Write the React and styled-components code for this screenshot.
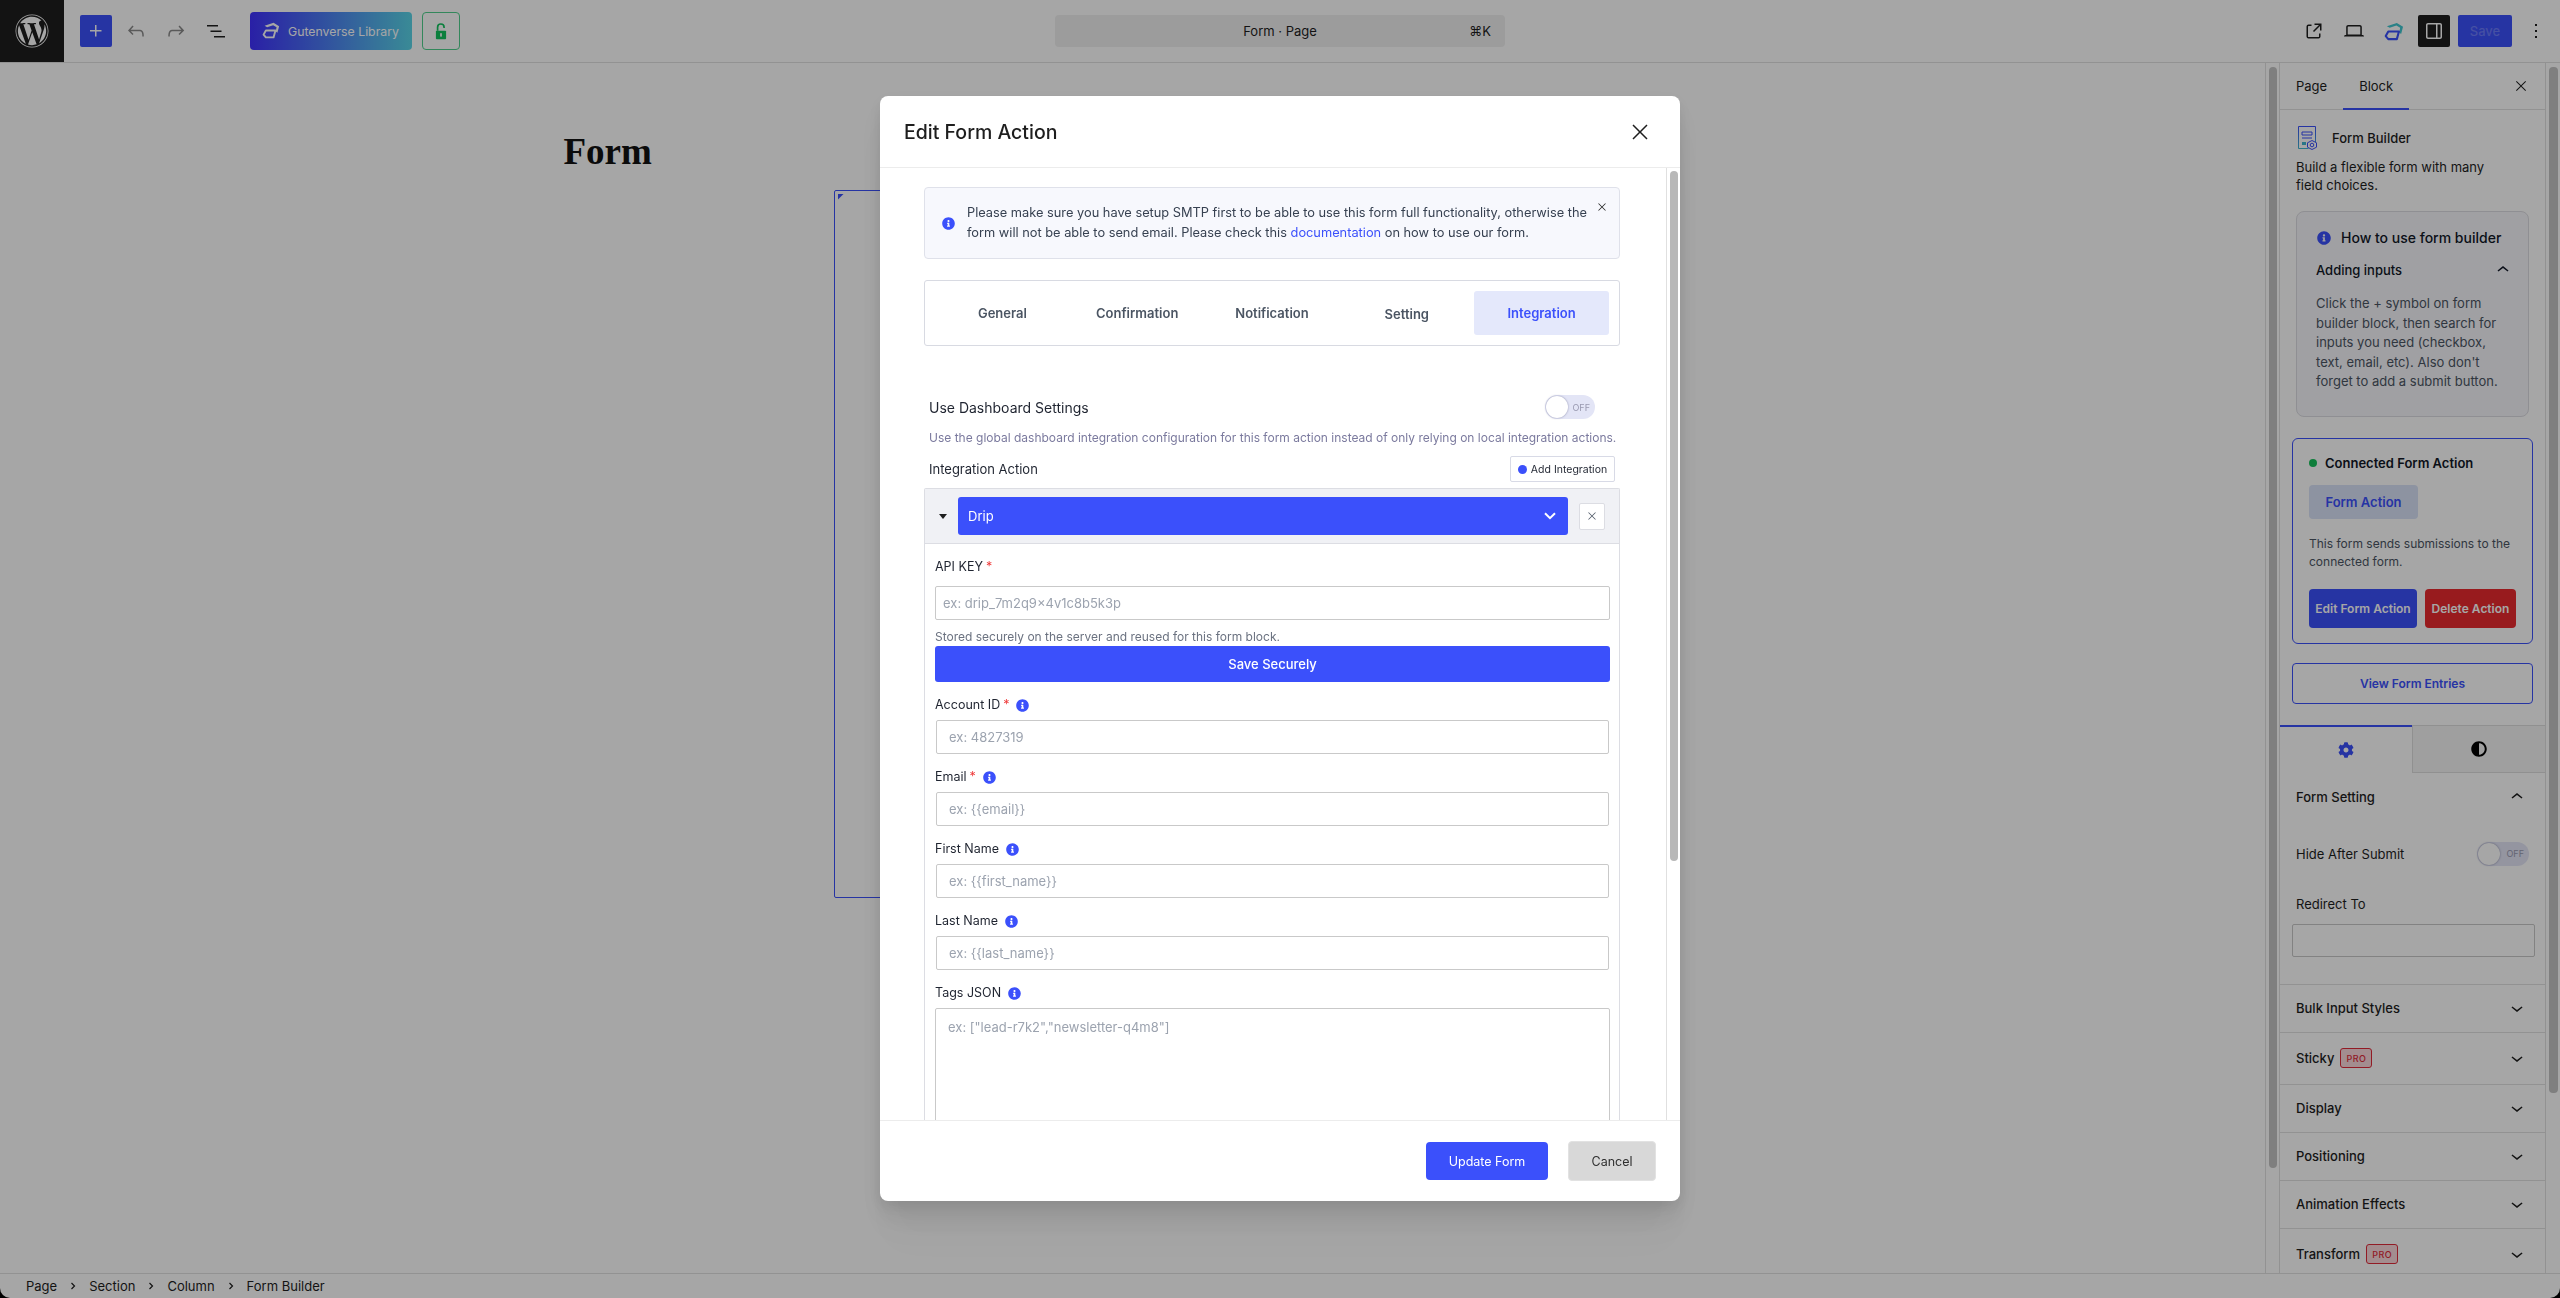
import React from 'react';
import styled, { createGlobalStyle } from 'styled-components';
import { FaWordpress, FaInfoCircle, FaCog, FaAdjust } from 'react-icons/fa';

const BLUE = '#3b50fb';

const GlobalStyle = createGlobalStyle`
  html, body {
    margin: 0;
    height: 100%;
    overflow: hidden;
    background: #000;
    font-family: Inter, "Liberation Sans", sans-serif;
    color: #1e1e1e;
  }
  * { box-sizing: border-box; }
`;

const Shell = styled.div`
  width: 100%;
  height: 100vh;
  display: flex;
  flex-direction: column;
  background: #fff;
  border-radius: 0 0 10px 10px;
  overflow: hidden;
`;

const TopBar = styled.header`
  height: 63px;
  flex: none;
  display: grid;
  grid-template-columns: 1fr 450px 1fr;
  align-items: center;
  border-bottom: 1px solid #e0e0e0;
`;

const TopLeft = styled.div`
  display: flex;
  align-items: center;
  height: 62px;
`;

const LogoTile = styled.div`
  width: 64px;
  height: 62px;
  background: #1e1e1e;
  color: #fff;
  display: flex;
  align-items: center;
  justify-content: center;
  font-size: 34px;
  margin-right: 16px;
`;

const InserterButton = styled.div`
  width: 32px;
  height: 32px;
  border-radius: 2px;
  background: ${BLUE};
  display: flex;
  align-items: center;
  justify-content: center;
  margin-right: 8px;
`;

const ToolIcon = styled.div`
  width: 32px;
  height: 32px;
  margin-right: ${(p) => p.$gap || 8}px;
  display: flex;
  align-items: center;
  justify-content: center;
  color: ${(p) => p.$color || '#1e1e1e'};
`;

const LibraryButton = styled.div`
  width: 162px;
  height: 38px;
  margin-left: 2px;
  border-radius: 4px;
  background: linear-gradient(90deg, #4031ff 0%, #59d5e7 100%);
  display: flex;
  align-items: center;
  gap: 8px;
  padding-left: 12px;
  color: #fff;
  font-size: 12.3px;
`;

const LockButton = styled.div`
  width: 38px;
  height: 38px;
  margin-left: 10px;
  border: 1px solid #4fd08c;
  border-radius: 4px;
  display: flex;
  align-items: center;
  justify-content: center;
`;

const CommandBar = styled.div`
  height: 32px;
  border-radius: 4px;
  background: #f0f0f0;
  display: flex;
  align-items: center;
  justify-content: center;
  position: relative;
  font-size: 13px;
`;

const Shortcut = styled.span`
  position: absolute;
  right: 14px;
`;

const TopRight = styled.div`
  display: flex;
  align-items: center;
  justify-content: flex-end;
  padding-right: 12px;
`;

const ToggleTile = styled.div`
  width: 32px;
  height: 32px;
  background: #1e1e1e;
  border-radius: 2px;
  display: flex;
  align-items: center;
  justify-content: center;
  margin-right: 8px;
`;

const SaveButton = styled.div`
  width: 54px;
  height: 32px;
  background: ${BLUE};
  border-radius: 2px;
  color: rgba(255, 255, 255, 0.25);
  font-size: 13px;
  font-weight: 500;
  display: flex;
  align-items: center;
  justify-content: center;
  margin-right: 12px;
`;

const Workspace = styled.div`
  flex: 1;
  min-height: 0;
  display: flex;
`;

const Canvas = styled.main`
  flex: 1;
  padding-top: 67px;
  display: flex;
  flex-direction: column;
  align-items: center;
`;

const PageTitle = styled.h1`
  width: 1138px;
  margin: 0 0 16px;
  font-family: "Liberation Serif", serif;
  font-size: 37px;
  line-height: 44px;
  font-weight: 700;
  color: #111;
`;

const FormBlock = styled.div`
  width: 598px;
  height: 708px;
  border: 1px solid ${BLUE};
  border-radius: 2px;
  padding: 3px;
`;

const BlockCorner = styled.div`
  width: 6px;
  height: 6px;
  background: ${BLUE};
  clip-path: polygon(0 0, 100% 0, 0 100%);
`;

const ScrollTrack = styled.div`
  width: 14px;
  flex: none;
  padding: ${(p) => p.$top}px 2px 0 3px;
  border-left: ${(p) => (p.$line ? '1px solid #e0e0e0' : 'none')};
`;

const ScrollThumb = styled.div`
  height: ${(p) => p.$height}px;
  border-radius: 4px;
  background: ${(p) => p.$color || '#c4c4c4'};
`;

const Sidebar = styled.aside`
  width: 267px;
  flex: none;
  border-left: 1px solid #e0e0e0;
  border-right: 1px solid #e0e0e0;
  overflow: hidden;
`;

const SideTabs = styled.div`
  height: 47px;
  display: flex;
  align-items: stretch;
  border-bottom: 1px solid #e0e0e0;
  position: relative;
`;

const SideTab = styled.div`
  padding: 0 16px;
  font-size: 13px;
  display: flex;
  align-items: center;
  margin-bottom: -1px;
  border-bottom: 2px solid ${(p) => (p.$active ? BLUE : 'transparent')};
`;

const SideClose = styled.div`
  margin-left: auto;
  margin-right: 16px;
  display: flex;
  align-items: center;
`;

const SidePad = styled.div`
  padding: 16px 16px 0;
`;

const BlockHead = styled.div`
  height: 24px;
  display: flex;
  align-items: center;
  gap: 14px;
  padding-left: 2px;
  font-size: 13px;
  font-weight: 500;
`;

const BlockDesc = styled.p`
  margin: 8px 0 17px;
  max-width: 210px;
  font-size: 13px;
  line-height: 18px;
`;

const HelpBox = styled.div`
  border: 1px solid #dcdce2;
  border-radius: 8px;
  background: #f6f6fb;
  padding: 16px 13px 24px 19px;
`;

const HelpTitle = styled.div`
  display: flex;
  align-items: center;
  gap: 10px;
  padding-left: 1px;
  font-size: 14px;
  line-height: 20px;
  font-weight: 500;
  color: #111827;
`;

const HelpSub = styled.div`
  margin-top: 13px;
  height: 18px;
  display: flex;
  justify-content: space-between;
  align-items: center;
  font-size: 13px;
  font-weight: 500;
  color: #111827;
`;

const HelpText = styled.p`
  margin: 15px 0 0;
  font-size: 13px;
  line-height: 19.5px;
  color: #4b5563;
`;

const ConnectedBox = styled.div`
  margin: 21px -4px 0;
  border: 1px solid ${BLUE};
  border-radius: 6px;
  padding: 15px 16px;
`;

const ConnectedHead = styled.div`
  display: flex;
  align-items: center;
  gap: 8px;
  font-size: 13px;
  line-height: 18px;
  font-weight: 600;
  color: #111827;
`;

const StatusDot = styled.span`
  width: 8px;
  height: 8px;
  border-radius: 50%;
  background: #16c15a;
`;

const ActionPill = styled.div`
  margin-top: 13px;
  width: 109px;
  height: 34px;
  border-radius: 4px;
  background: #d9e2f7;
  color: ${BLUE};
  font-size: 13px;
  font-weight: 600;
  display: flex;
  align-items: center;
  justify-content: center;
`;

const ConnectedText = styled.p`
  margin: 16px 0 18px;
  font-size: 12px;
  line-height: 18px;
  color: #4b5563;
`;

const ActionRow = styled.div`
  display: flex;
  gap: 8px;
`;

const ActionButton = styled.div`
  width: ${(p) => p.$width}px;
  height: 39px;
  border-radius: 4px;
  background: ${(p) => p.$bg};
  color: #fff;
  font-size: 12px;
  font-weight: 600;
  display: flex;
  align-items: center;
  justify-content: center;
`;

const EntriesButton = styled.div`
  margin: 19px -4px 0;
  height: 41px;
  border: 1px solid ${BLUE};
  border-radius: 4px;
  color: ${BLUE};
  font-size: 12px;
  font-weight: 600;
  display: flex;
  align-items: center;
  justify-content: center;
`;

const StyleTabs = styled.div`
  margin-top: 21px;
  height: 48px;
  display: grid;
  grid-template-columns: 132px 133px;
`;

const StyleTab = styled.div`
  display: flex;
  align-items: center;
  justify-content: center;
  font-size: 16px;
  color: ${(p) => (p.$active ? BLUE : '#000')};
  background: ${(p) => (p.$active ? 'transparent' : '#f5f5f5')};
  border-top: ${(p) => (p.$active ? `2px solid ${BLUE}` : '1px solid #dedede')};
  border-left: ${(p) => (p.$active ? 'none' : '1px solid #dedede')};
  border-bottom: ${(p) => (p.$active ? 'none' : '1px solid #dedede')};
`;

const PanelRow = styled.div`
  height: ${(p) => p.$height}px;
  padding: 0 16px;
  display: flex;
  align-items: center;
  justify-content: space-between;
  font-size: 13px;
  font-weight: ${(p) => p.$weight || 400};
  border-top: ${(p) => (p.$line ? '1px solid #e0e0e0' : 'none')};
`;

const RowLabel = styled.span`
  display: flex;
  align-items: center;
  gap: 6px;
`;

const ProBadge = styled.span`
  width: 32px;
  height: 20px;
  border: 1px solid #e02a3a;
  border-radius: 3px;
  background: #fbd9dc;
  color: #e02a3a;
  font-size: 9px;
  font-weight: 500;
  letter-spacing: 0.4px;
  display: flex;
  align-items: center;
  justify-content: center;
`;

const SwitchTrack = styled.div`
  width: ${(p) => p.$width}px;
  height: 24px;
  border-radius: 12px;
  background: #e3e5f6;
  display: flex;
  align-items: center;
  justify-content: space-between;
  padding: 0 5px 0 1px;
  font-size: 9px;
  color: #9a9ab0;
`;

const SwitchKnob = styled.span`
  width: 22px;
  height: 22px;
  border-radius: 50%;
  background: #fff;
  box-shadow: 0 0 2px rgba(40, 40, 90, 0.5);
`;

const HideRow = styled.div`
  margin-top: 0;
  padding: 21px 16px 0;
  display: flex;
  align-items: center;
  justify-content: space-between;
  font-size: 13px;
`;

const RedirectBlock = styled.div`
  padding: 30px 10px 27px 16px;
  font-size: 13px;
  line-height: 16px;
`;

const RedirectInput = styled.div`
  margin: 12px 0 0 -4px;
  height: 33px;
  border: 1px solid #c8c8c8;
  border-radius: 2px;
`;

const StatusBar = styled.footer`
  height: 25px;
  flex: none;
  border-top: 1px solid #e0e0e0;
  padding-left: 26px;
  display: flex;
  align-items: center;
  gap: 13px;
  font-size: 13px;
`;

const Overlay = styled.div`
  position: fixed;
  inset: 0;
  padding-bottom: 1px;
  background: rgba(0, 0, 0, 0.35);
  display: flex;
  align-items: center;
  justify-content: center;
`;

const Modal = styled.div`
  width: 800px;
  height: 1105px;
  background: #fff;
  border-radius: 8px;
  overflow: hidden;
  display: flex;
  flex-direction: column;
  box-shadow: 0 5px 15px rgba(0, 0, 0, 0.08), 0 15px 27px rgba(0, 0, 0, 0.07),
    0 30px 36px rgba(0, 0, 0, 0.04), 0 50px 43px rgba(0, 0, 0, 0.02);
`;

const ModalHeader = styled.div`
  height: 72px;
  flex: none;
  border-bottom: 1px solid #ececec;
  padding: 0 28px 0 24px;
  display: flex;
  align-items: center;
  justify-content: space-between;
`;

const ModalTitle = styled.h2`
  margin: 0;
  font-size: 19.5px;
  font-weight: 500;
`;

const ModalBody = styled.div`
  flex: 1;
  min-height: 0;
  display: flex;
`;

const ModalContent = styled.div`
  width: 786px;
  padding: 19px 46px 0 44px;
  overflow: hidden;
`;

const Notice = styled.div`
  height: 72px;
  position: relative;
  display: flex;
  align-items: center;
  gap: 12px;
  padding-left: 17px;
  background: #f7f8fd;
  border: 1px solid #dfe1ea;
  border-radius: 4px;
  color: ${BLUE};
  font-size: 13px;
`;

const NoticeText = styled.div`
  width: 630px;
  font-size: 12.8px;
  line-height: 20px;
  color: #374151;
`;

const NoticeLink = styled.span`
  color: ${BLUE};
`;

const NoticeClose = styled.div`
  position: absolute;
  top: 13px;
  right: 11px;
  display: flex;
`;

const Tabs = styled.div`
  margin: 21px 0 49px;
  height: 66px;
  padding: 10px;
  border: 1px solid #d8dae2;
  border-radius: 3px;
  display: grid;
  grid-template-columns: repeat(5, 1fr);
`;

const TabItem = styled.div`
  display: flex;
  align-items: center;
  justify-content: center;
  border-radius: 3px;
  padding-top: ${(p) => (p.$low ? 2 : 0)}px;
  font-size: 13px;
  font-weight: 600;
  color: ${(p) => (p.$active ? BLUE : '#4b5563')};
  background: ${(p) => (p.$active ? '#e4e8fb' : 'transparent')};
`;

const DashboardRow = styled.div`
  height: 24px;
  padding: 0 25px 0 5px;
  display: flex;
  align-items: center;
  justify-content: space-between;
  font-size: 14px;
  color: #1f2430;
`;

const DashboardHelp = styled.p`
  margin: 11px 0 10px;
  padding-left: 5px;
  font-size: 12px;
  line-height: 16px;
  white-space: nowrap;
  color: #7b7a9e;
`;

const IntegrationRow = styled.div`
  height: 26px;
  padding: 0 5px;
  display: flex;
  align-items: center;
  justify-content: space-between;
  font-size: 13px;
  color: #1f2430;
`;

const AddButton = styled.div`
  width: 105px;
  height: 26px;
  border: 1px solid #d8dae6;
  border-radius: 2px;
  display: flex;
  align-items: center;
  justify-content: center;
  gap: 4px;
  font-size: 10.5px;
  color: #1f2430;
`;

const AddDot = styled.span`
  width: 9px;
  height: 9px;
  border-radius: 50%;
  background: ${BLUE};
`;

const Repeater = styled.div`
  margin-top: 6px;
  border: 1px solid #dcdde3;
  border-bottom: none;
  border-radius: 2px 2px 0 0;
`;

const RepeaterHead = styled.div`
  height: 55px;
  padding-left: 14px;
  display: flex;
  align-items: center;
  background: #f0f1f5;
  border-bottom: 1px solid #dcdde3;
`;

const Caret = styled.span`
  width: 0;
  height: 0;
  margin-right: 11px;
  border-left: 4px solid transparent;
  border-right: 4px solid transparent;
  border-top: 5px solid #1e1e1e;
`;

const DripSelect = styled.div`
  width: 610px;
  height: 38px;
  padding: 0 12px 0 10px;
  margin-right: 11px;
  background: ${BLUE};
  border-radius: 3px;
  color: #fff;
  font-size: 13px;
  display: flex;
  align-items: center;
  justify-content: space-between;
`;

const RemoveButton = styled.div`
  width: 26px;
  height: 27px;
  background: #fff;
  border: 1px solid #dcdde3;
  border-radius: 2px;
  display: flex;
  align-items: center;
  justify-content: center;
`;

const Fields = styled.div`
  padding: 15px 9px 0 10px;
`;

const FieldLabel = styled.label`
  display: flex;
  align-items: center;
  gap: 3px;
  font-size: 12.5px;
  line-height: 16px;
  color: #1f2430;
  margin-top: ${(p) => p.$top ?? 15}px;
`;

const Star = styled.span`
  color: #ef3b3b;
`;

const FieldInfo = styled.span`
  display: flex;
  margin-left: 4px;
  color: ${BLUE};
  font-size: 13px;
`;

const TextInput = styled.input`
  display: block;
  width: ${(p) => (p.$flush ? '100%' : 'calc(100% - 2px)')};
  height: 34px;
  margin: ${(p) => (p.$flush ? '11px 0 0' : '7px 1px 0')};
  padding: 0 ${(p) => (p.$flush ? 7 : 12)}px;
  border: 1px solid #c9c9c9;
  border-radius: 2px;
  background: #fff;
  font: 13px Inter, sans-serif;
  outline: none;
  &::placeholder {
    color: #9ca3af;
    opacity: 1;
  }
`;

const StoredNote = styled.div`
  margin: 9px 0 1px;
  font-size: 12px;
  line-height: 16px;
  color: #6b7280;
`;

const SecureButton = styled.div`
  height: 36px;
  background: ${BLUE};
  border-radius: 3px;
  color: #fff;
  font-size: 13px;
  font-weight: 500;
  display: flex;
  align-items: center;
  justify-content: center;
`;

const TagsInput = styled.textarea`
  display: block;
  width: 100%;
  height: 200px;
  margin-top: 7px;
  padding: 10px 12px;
  border: 1px solid #c9c9c9;
  border-radius: 2px;
  font: 13px/16px Inter, sans-serif;
  resize: none;
  outline: none;
  &::placeholder {
    color: #9ca3af;
    opacity: 1;
  }
`;

const ModalFooter = styled.div`
  height: 81px;
  flex: none;
  border-top: 1px solid #ececec;
  padding-right: 24px;
  display: flex;
  align-items: center;
  justify-content: flex-end;
  gap: 20px;
`;

const FooterButton = styled.div`
  width: ${(p) => p.$width}px;
  height: ${(p) => (p.$primary ? 38 : 40)}px;
  border-radius: 4px;
  background: ${(p) => (p.$primary ? BLUE : '#d8d8d8')};
  border: ${(p) => (p.$primary ? 'none' : '1px solid #e2e2e2')};
  color: ${(p) => (p.$primary ? '#fff' : '#2f2f2f')};
  font-size: 12.5px;
  display: flex;
  align-items: center;
  justify-content: center;
`;

const WpIcon = ({ d, size = 24, color = 'currentColor' }) => (
  <svg width={size} height={size} viewBox="0 0 24 24" fill={color}>
    <path d={d} />
  </svg>
);

const ICONS = {
  plus: 'M11 12.5V17.5H12.5V12.5H17.5V11H12.5V6H11V11H6V12.5H11Z',
  undo: 'M18.3 11.7c-.6-.6-1.4-.9-2.3-.9H6.7l2.9-3.3-1.1-1-4.5 5L8.5 16l1-1-2.7-2.7H16c.5 0 .9.2 1.3.5 1 1 1 3.4 1 4.5v.3h1.5v-.2c0-1.5 0-4.3-1.5-5.7z',
  redo: 'M15.6 6.5l-1.1 1 2.9 3.3H8c-.9 0-1.7.3-2.3.9-1.4 1.5-1.4 4.2-1.4 5.6v.2h1.5v-.3c0-1.1 0-3.5 1-4.5.3-.3.7-.5 1.3-.5h9.2L14.5 15l1.1 1.1 4.6-4.6-4.6-5z',
  list: 'M3 6h11v1.5H3V6Zm3.5 5.5h11V13h-11v-1.5ZM21 17H10v1.5h11V17Z',
  close: 'm13.06 12 6.47-6.47-1.06-1.06L12 10.94 5.53 4.47 4.47 5.53 10.94 12l-6.47 6.47 1.06 1.06L12 13.06l6.47 6.47 1.06-1.06L13.06 12Z',
  external: 'M19.5 4.5h-7V6h4.44l-5.97 5.97 1.06 1.06L18 7.06v4.44h1.5v-7Zm-13 1a2 2 0 0 0-2 2v10a2 2 0 0 0 2 2h10a2 2 0 0 0 2-2v-3H17v3a.5.5 0 0 1-.5.5h-10a.5.5 0 0 1-.5-.5v-10a.5.5 0 0 1 .5-.5h3V5.5h-3Z',
  laptop: 'M20.5 16h-.7V8c0-1.1-.9-2-2-2H6.2c-1.1 0-2 .9-2 2v8h-.7c-.8 0-1.5.7-1.5 1.5h20c0-.8-.7-1.5-1.5-1.5zM5.7 8c0-.3.2-.5.5-.5h11.6c.3 0 .5.2.5.5v7.6H5.7V8z',
  sidebar: 'M18 4H6c-1.1 0-2 .9-2 2v12c0 1.1.9 2 2 2h12c1.1 0 2-.9 2-2V6c0-1.1-.9-2-2-2zM5.5 18V6c0-.3.2-.5.5-.5h8v13H6c-.3 0-.5-.2-.5-.5zm13 0c0 .3-.2.5-.5.5h-2.5v-13H18c.3 0 .5.2.5.5v12z',
  dots: 'M13 19h-2v-2h2v2zm0-6h-2v-2h2v2zm0-6h-2V5h2v2z',
  up: 'M6.5 12.4L12 8l5.5 4.4-.9 1.2L12 10l-4.5 3.6-1-1.2z',
  down: 'M17.5 11.6L12 16l-5.5-4.4.9-1.2L12 14l4.6-3.6 1 1.2z',
};

const GutenverseMark = ({ width = 20, roof = '#fff', base = '#fff' }) => (
  <svg width={width} height={width * 0.95} viewBox="6 5 21 20" fill="none">
    <path d="M9 9.5 19.5 6 26 10l-2 7.5-2-1.5 1-5-4-2.3L12 11Z" fill={roof} />
    <path d="M10.5 15h11.2L19.5 23h-9l-2.7-3.2Z" stroke={base} strokeWidth="2.2" strokeLinejoin="round" />
  </svg>
);

const OpenLock = () => (
  <svg width="12" height="17" viewBox="0 0 14 20" fill="none">
    <path d="M3 9V5a3.8 3.8 0 0 1 7.6 0v.8" stroke="#12c45f" strokeWidth="2" />
    <rect x="1" y="9" width="12" height="10" rx="1" fill="#12c45f" />
    <rect x="6" y="12" width="2" height="4" fill="#fff" />
  </svg>
);

const SelectChevron = () => (
  <svg width="12" height="8" viewBox="0 0 12 8" fill="none">
    <path d="m1 1.2 5 5 5-5" stroke="#fff" strokeWidth="2" />
  </svg>
);

const FormBuilderIcon = () => (
  <svg width="20" height="24" viewBox="0 0 20 24" fill="none">
    <defs>
      <linearGradient id="fb" x1="0" y1="0" x2="0" y2="1">
        <stop offset="0" stopColor="#3b50fb" />
        <stop offset="1" stopColor="#40b5d0" />
      </linearGradient>
    </defs>
    <path d="M.5.5h17v17M.5.5v22h10" stroke="url(#fb)" />
    <path d="M.5 3h17" stroke="url(#fb)" />
    <path d="M4 6h10v3H4zM4 12h10" stroke="#3b50fb" />
    <path d="M4 16h4v3H4z" fill="#40b5d0" />
    <path d="m14 14.5 4.5 2.3v4.4L14 23.5l-4.5-2.3v-4.4Z" stroke="#3b50fb" fill="#fff" />
    <circle cx="14" cy="19" r="1.8" stroke="#3b50fb" />
  </svg>
);

const Crumb = ({ last, children }) => (
  <>
    <span>{children}</span>
    {!last && (
      <svg width="6" height="8" viewBox="0 0 6 8" fill="none">
        <path d="m1.5 1 3 3-3 3" stroke="#1e1e1e" strokeWidth="1.2" />
      </svg>
    )}
  </>
);

const panels = [
  { label: 'Bulk Input Styles', height: 48 },
  { label: 'Sticky', height: 52, pro: true },
  { label: 'Display', height: 48 },
  { label: 'Positioning', height: 48 },
  { label: 'Animation Effects', height: 48 },
  { label: 'Transform', height: 52, pro: true },
];

const fields = [
  { label: 'Account ID', required: true, placeholder: 'ex: 4827319' },
  { label: 'Email', required: true, placeholder: 'ex: {{email}}' },
  { label: 'First Name', placeholder: 'ex: {{first_name}}' },
  { label: 'Last Name', placeholder: 'ex: {{last_name}}' },
];

const tabs = ['General', 'Confirmation', 'Notification', 'Setting', 'Integration'];

function App() {
  return (
    <>
      <GlobalStyle />
      <Shell>
        <TopBar>
          <TopLeft>
            <LogoTile>
              <FaWordpress />
            </LogoTile>
            <InserterButton>
              <WpIcon d={ICONS.plus} color="#fff" />
            </InserterButton>
            <ToolIcon $color="#8a8a8a"><WpIcon d={ICONS.undo} /></ToolIcon>
            <ToolIcon $color="#8a8a8a"><WpIcon d={ICONS.redo} /></ToolIcon>
            <ToolIcon $gap={16}><WpIcon d={ICONS.list} /></ToolIcon>
            <LibraryButton>
              <GutenverseMark width={18} />
              Gutenverse Library
            </LibraryButton>
            <LockButton>
              <OpenLock />
            </LockButton>
          </TopLeft>
          <CommandBar>
            Form · Page
            <Shortcut>⌘K</Shortcut>
          </CommandBar>
          <TopRight>
            <ToolIcon><WpIcon d={ICONS.external} /></ToolIcon>
            <ToolIcon><WpIcon d={ICONS.laptop} /></ToolIcon>
            <ToolIcon>
              <GutenverseMark roof="#3fc6cf" base={BLUE} />
            </ToolIcon>
            <ToggleTile>
              <WpIcon d={ICONS.sidebar} color="#fff" />
            </ToggleTile>
            <SaveButton>Save</SaveButton>
            <WpIcon d={ICONS.dots} />
          </TopRight>
        </TopBar>

        <Workspace>
          <Canvas>
            <PageTitle>Form</PageTitle>
            <FormBlock>
              <BlockCorner />
            </FormBlock>
          </Canvas>
          <ScrollTrack $top={4} $line>
            <ScrollThumb $height={1101} />
          </ScrollTrack>
          <Sidebar>
            <SideTabs>
              <SideTab>Page</SideTab>
              <SideTab $active>Block</SideTab>
              <SideClose>
                <WpIcon d={ICONS.close} size={16} />
              </SideClose>
            </SideTabs>
            <SidePad>
              <BlockHead>
                <FormBuilderIcon />
                Form Builder
              </BlockHead>
              <BlockDesc>Build a flexible form with many field choices.</BlockDesc>
              <HelpBox>
                <HelpTitle>
                  <FaInfoCircle color={BLUE} size={14} />
                  How to use form builder
                </HelpTitle>
                <HelpSub>
                  Adding inputs
                  <WpIcon d={ICONS.up} />
                </HelpSub>
                <HelpText>
                  Click the + symbol on form builder block, then search for inputs you need
                  (checkbox, text, email, etc). Also don't forget to add a submit button.
                </HelpText>
              </HelpBox>
              <ConnectedBox>
                <ConnectedHead>
                  <StatusDot />
                  Connected Form Action
                </ConnectedHead>
                <ActionPill>Form Action</ActionPill>
                <ConnectedText>This form sends submissions to the connected form.</ConnectedText>
                <ActionRow>
                  <ActionButton $width={108} $bg={BLUE}>Edit Form Action</ActionButton>
                  <ActionButton $width={91} $bg="#ea2a2e">Delete Action</ActionButton>
                </ActionRow>
              </ConnectedBox>
              <EntriesButton>View Form Entries</EntriesButton>
            </SidePad>
            <StyleTabs>
              <StyleTab $active><FaCog /></StyleTab>
              <StyleTab><FaAdjust /></StyleTab>
            </StyleTabs>
            <PanelRow $height={48} $weight={500}>
              Form Setting
              <WpIcon d={ICONS.up} />
            </PanelRow>
            <HideRow>
              Hide After Submit
              <SwitchTrack $width={52}>
                <SwitchKnob />
                OFF
              </SwitchTrack>
            </HideRow>
            <RedirectBlock>
              Redirect To
              <RedirectInput />
            </RedirectBlock>
            {panels.map((panel) => (
              <PanelRow key={panel.label} $height={panel.height} $weight={500} $line>
                <RowLabel>
                  {panel.label}
                  {panel.pro && <ProBadge>PRO</ProBadge>}
                </RowLabel>
                <WpIcon d={ICONS.down} />
              </PanelRow>
            ))}
          </Sidebar>
          <ScrollTrack $top={4}>
            <ScrollThumb $height={1026} />
          </ScrollTrack>
        </Workspace>

        <StatusBar>
          <Crumb>Page</Crumb>
          <Crumb>Section</Crumb>
          <Crumb>Column</Crumb>
          <Crumb last>Form Builder</Crumb>
        </StatusBar>
      </Shell>

      <Overlay>
        <Modal>
          <ModalHeader>
            <ModalTitle>Edit Form Action</ModalTitle>
            <WpIcon d={ICONS.close} size={24} />
          </ModalHeader>
          <ModalBody>
            <ModalContent>
              <Notice>
                <FaInfoCircle size={13} />
                <NoticeText>
                  Please make sure you have setup SMTP first to be able to use this form full
                  functionality, otherwise the form will not be able to send email. Please check
                  this <NoticeLink>documentation</NoticeLink> on how to use our form.
                </NoticeText>
                <NoticeClose>
                  <WpIcon d={ICONS.close} size={12} color="#1e1e1e" />
                </NoticeClose>
              </Notice>
              <Tabs>
                {tabs.map((tab) => (
                  <TabItem key={tab} $active={tab === 'Integration'} $low={tab === 'Setting'}>
                    {tab}
                  </TabItem>
                ))}
              </Tabs>
              <DashboardRow>
                Use Dashboard Settings
                <SwitchTrack $width={50}>
                  <SwitchKnob />
                  OFF
                </SwitchTrack>
              </DashboardRow>
              <DashboardHelp>
                Use the global dashboard integration configuration for this form action instead of
                only relying on local integration actions.
              </DashboardHelp>
              <IntegrationRow>
                Integration Action
                <AddButton>
                  <AddDot />
                  Add Integration
                </AddButton>
              </IntegrationRow>
              <Repeater>
                <RepeaterHead>
                  <Caret />
                  <DripSelect>
                    Drip
                    <SelectChevron />
                  </DripSelect>
                  <RemoveButton>
                    <WpIcon d={ICONS.close} size={12} color="#4b5563" />
                  </RemoveButton>
                </RepeaterHead>
                <Fields>
                  <FieldLabel $top={0}>
                    API KEY <Star>*</Star>
                  </FieldLabel>
                  <TextInput $flush placeholder="ex: drip_7m2q9x4v1c8b5k3p" readOnly />
                  <StoredNote>Stored securely on the server and reused for this form block.</StoredNote>
                  <SecureButton>Save Securely</SecureButton>
                  {fields.map((field) => (
                    <React.Fragment key={field.label}>
                      <FieldLabel>
                        {field.label}
                        {field.required && <Star>*</Star>}
                        <FieldInfo><FaInfoCircle /></FieldInfo>
                      </FieldLabel>
                      <TextInput placeholder={field.placeholder} readOnly />
                    </React.Fragment>
                  ))}
                  <FieldLabel>
                    Tags JSON
                    <FieldInfo><FaInfoCircle /></FieldInfo>
                  </FieldLabel>
                  <TagsInput placeholder={'ex: ["lead-r7k2","newsletter-q4m8"]'} readOnly />
                </Fields>
              </Repeater>
            </ModalContent>
            <ScrollTrack $top={3} $line>
              <ScrollThumb $height={690} $color="#b8b8b8" />
            </ScrollTrack>
          </ModalBody>
          <ModalFooter>
            <FooterButton $width={122} $primary>Update Form</FooterButton>
            <FooterButton $width={88}>Cancel</FooterButton>
          </ModalFooter>
        </Modal>
      </Overlay>
    </>
  );
}

export default App;
